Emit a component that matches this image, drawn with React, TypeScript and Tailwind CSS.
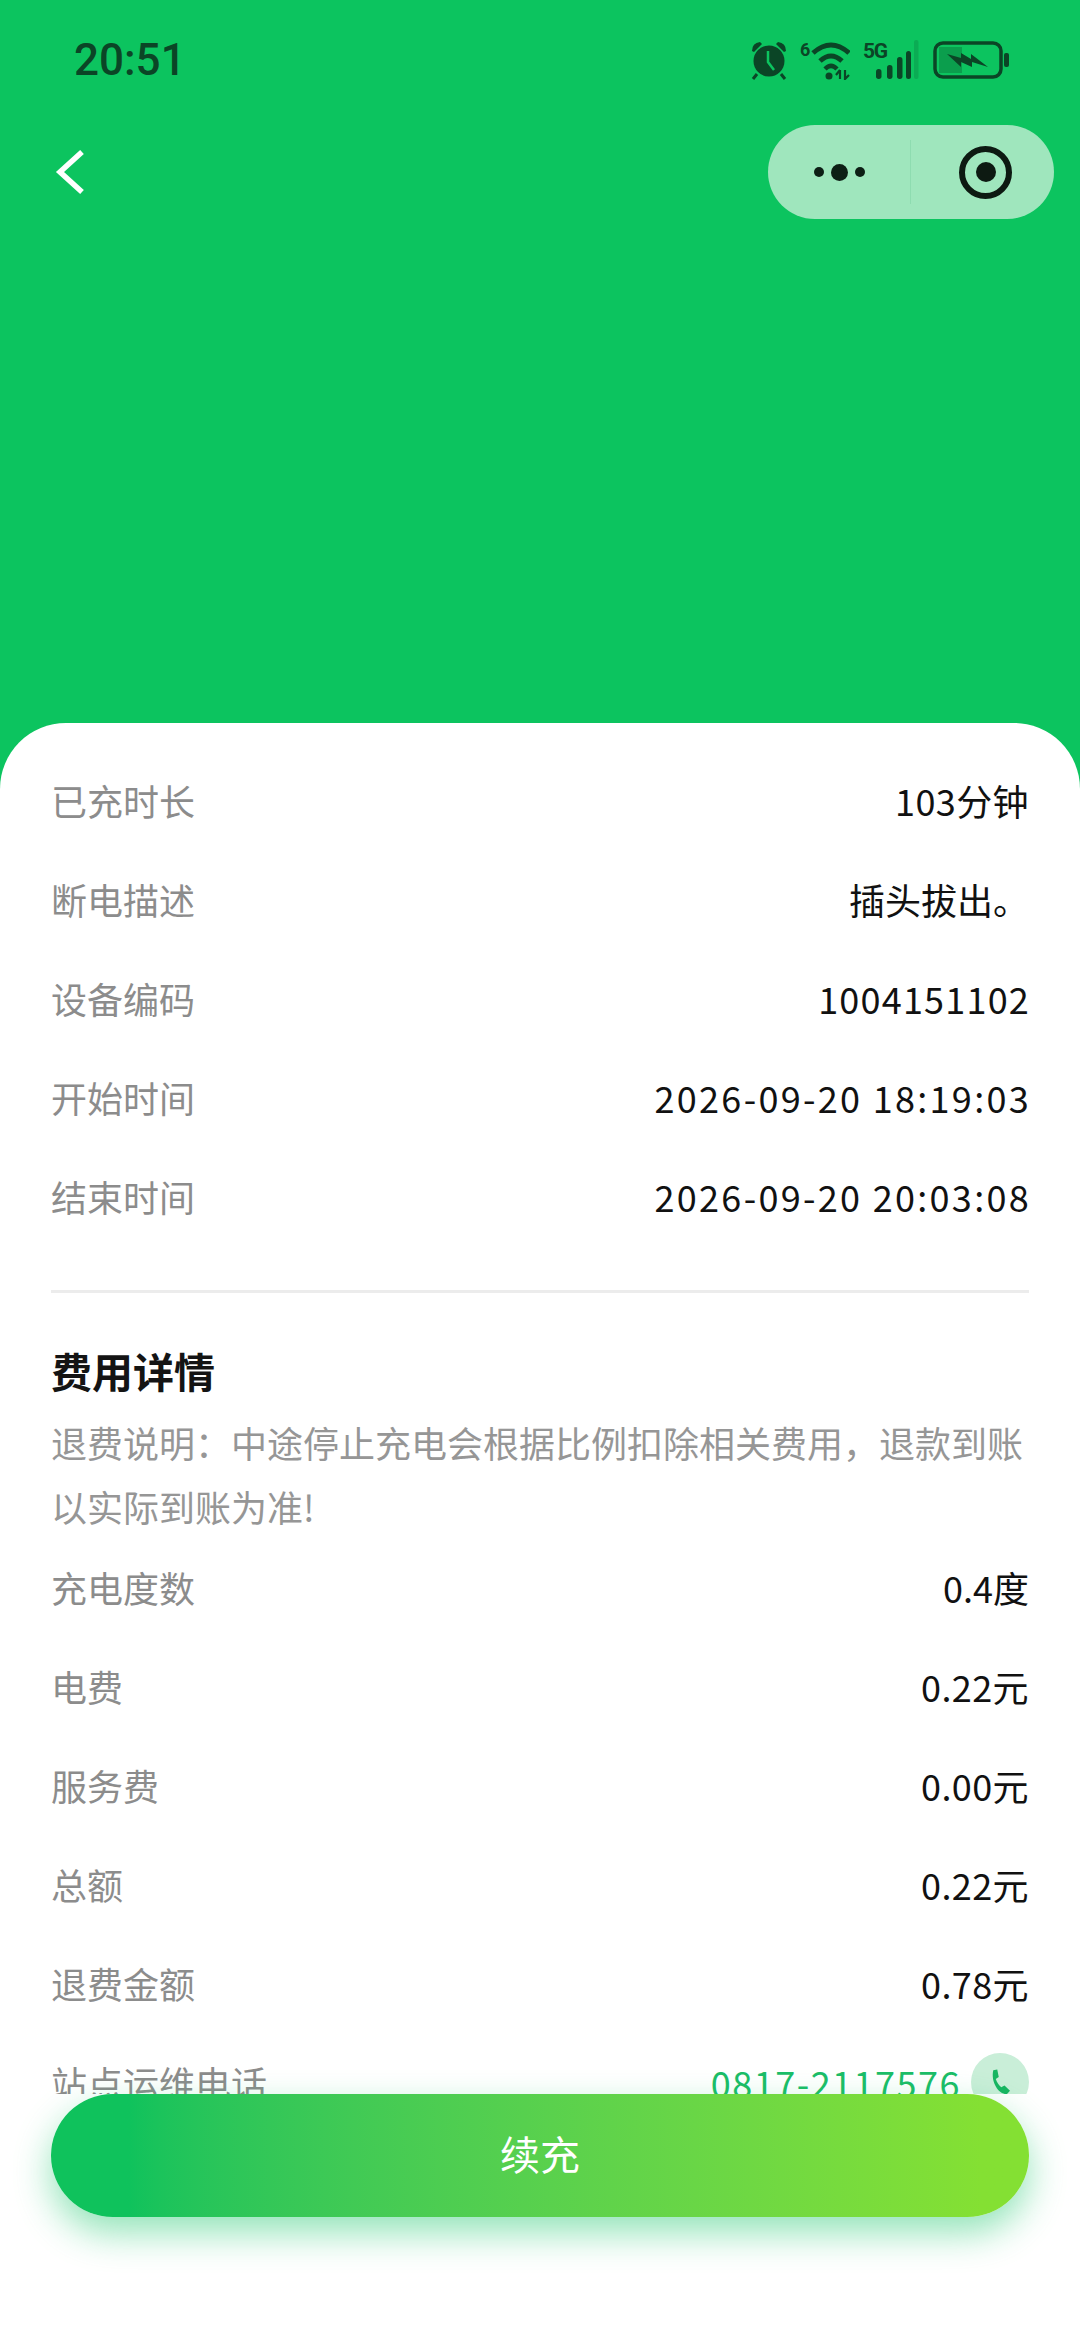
const cjk = { fontFamily: '"Noto Sans CJK SC", "Noto Sans", sans-serif' };

const chargeRows = [
  { label: "已充时长", value: "103分钟", track: "tracking-[0.4px]" },
  { label: "断电描述", value: "插头拔出。", track: "" },
  { label: "设备编码", value: "1004151102", track: "tracking-[1.2px] mr-[-1px]" },
  { label: "开始时间", value: "2026-09-20 18:19:03", track: "tracking-[2.3px] mr-[-2px]" },
  { label: "结束时间", value: "2026-09-20 20:03:08", track: "tracking-[2.3px] mr-[-2px]" },
];

const feeRows = [
  { label: "充电度数", value: "0.4度", track: "" },
  { label: "电费", value: "0.22元", track: "tracking-[0.4px]" },
  { label: "服务费", value: "0.00元", track: "tracking-[0.4px]" },
  { label: "总额", value: "0.22元", track: "tracking-[0.4px]" },
  { label: "退费金额", value: "0.78元", track: "tracking-[0.4px]" },
];

function Row({ label, children }: { label: string; children: React.ReactNode }) {
  return (
    <div className="flex h-[99px] items-center justify-between">
      <span className="text-[36px] leading-none text-[#8c8c8c]">{label}</span>
      {children}
    </div>
  );
}

function StatusIcons() {
  return (
    <div className="flex items-center text-[#0b4526]">
      <svg width="38" height="40" viewBox="0 0 38 40" className="mr-[12px]">
        <circle cx="19" cy="21" r="15.5" fill="currentColor" />
        <path d="M2 11 Q2 3 10 2 L12 4 L4 12Z M36 11 Q36 3 28 2 L26 4 L34 12Z" fill="currentColor" />
        <path d="M7 34 L3 39 M31 34 L35 39" stroke="currentColor" strokeWidth="3" />
        <path d="M18 11 V22 L24 30" fill="none" stroke="#0cc45f" strokeWidth="2.5" />
      </svg>
      <svg width="50" height="40" viewBox="0 0 50 40" className="mr-[13px]">
        <text x="0" y="16" fontSize="18" fontWeight="700" fill="currentColor" fontFamily="Roboto, sans-serif">6</text>
        <path d="M13 13 Q31 -3 49 13" fill="none" stroke="currentColor" strokeWidth="5" />
        <path d="M20 21 Q31 11 42 21" fill="none" stroke="currentColor" strokeWidth="5" />
        <path d="M25 29 Q31 23 37 29" fill="none" stroke="currentColor" strokeWidth="4.5" />
        <circle cx="29" cy="36" r="3.5" fill="currentColor" />
        <path d="M40 30 V39 M36 35 L40 30 M45 30 V39 L49 35" fill="none" stroke="currentColor" strokeWidth="2.2" />
      </svg>
      <svg width="56" height="40" viewBox="0 0 56 40" className="mr-[14px]">
        <text x="0" y="18" fontSize="21" fontWeight="700" fill="currentColor" fontFamily="Roboto, sans-serif" textLength="25">5G</text>
        <rect x="13" y="29" width="5.5" height="10" rx="2.7" fill="currentColor" />
        <rect x="24" y="25" width="5.5" height="14" rx="2.7" fill="currentColor" />
        <rect x="34" y="17" width="5.5" height="22" rx="2.7" fill="currentColor" />
        <rect x="43" y="11" width="5" height="28" rx="2.5" fill="currentColor" />
        <rect x="51" y="0" width="4.5" height="39" rx="2" fill="currentColor" opacity="0.18" />
      </svg>
      <svg width="76" height="38" viewBox="0 0 76 38">
        <rect x="2" y="2" width="66" height="34" rx="8" fill="none" stroke="currentColor" strokeWidth="3.5" />
        <path d="M6 6 H29 V32 H6Z" fill="currentColor" opacity="0.3" />
        <path d="M14 13 L28 17 L28 12 L38 18 L38 13 L55 26 L39 21 L39 26 L28 21 L28 26Z" fill="currentColor" />
        <rect x="71" y="12" width="5" height="14" rx="2" fill="currentColor" />
      </svg>
    </div>
  );
}

export default function App() {
  return (
    <div className="relative flex h-[2340px] w-[1080px] flex-col overflow-hidden bg-[#0cc45f]" style={cjk}>
      <header className="h-[723px] shrink-0 pt-[40px]">
        <div className="flex h-[40px] items-center justify-between pl-[74px] pr-[71px]">
          <span className="text-[44px] font-medium leading-none text-[#0b4526]" style={{ fontFamily: "Roboto, sans-serif" }}>
            20:51
          </span>
          <StatusIcons />
        </div>
        <div className="mt-[45px] flex h-[94px] items-center justify-between pl-[55px] pr-[26px]">
          <svg width="30" height="46" viewBox="0 0 30 46">
            <path d="M27 3 L5 23 L27 43" fill="none" stroke="#fff" strokeWidth="5.5" />
          </svg>
          <div className="flex h-[94px] w-[286px] items-center rounded-[47px] bg-[#9fe6bd]">
            <div className="flex h-[64px] w-[143px] items-center justify-center gap-[7px] border-r border-[#8edcb0]">
              <span className="h-[10px] w-[10px] rounded-full bg-[#0d1f15]" />
              <span className="h-[17px] w-[17px] rounded-full bg-[#0d1f15]" />
              <span className="h-[10px] w-[10px] rounded-full bg-[#0d1f15]" />
            </div>
            <div className="flex flex-1 items-center justify-center pl-[6px]">
              <div className="flex h-[53px] w-[53px] items-center justify-center rounded-full border-[6px] border-[#0d1a12]">
                <span className="h-[20px] w-[20px] rounded-full bg-[#0d1a12]" />
              </div>
            </div>
          </div>
        </div>
      </header>

      <main className="flex-1 rounded-t-[66px] bg-white px-[51px] pt-[27px]">
        {chargeRows.map((row) => (
          <Row key={row.label} label={row.label}>
            <span className={`text-[36px] leading-none text-[#111] ${row.track}`}>{row.value}</span>
          </Row>
        ))}
        <div className="mt-[45px] h-[3px] bg-[#ececec]" />
        <h2 className="mt-[47px] text-[41px] font-bold leading-[60px] text-[#141414]">费用详情</h2>
        <p className="mb-[-1px] mt-[10px] text-[36px] leading-[64px] text-[#969696]">
          退费说明：中途停止充电会根据比例扣除相关费用，退款到账以实际到账为准!
        </p>
        {feeRows.map((row) => (
          <Row key={row.label} label={row.label}>
            <span className={`text-[36px] leading-none text-[#111] ${row.track}`}>{row.value}</span>
          </Row>
        ))}
        <Row label="站点运维电话">
          <div className="flex items-center gap-[10px]">
            <span className="text-[36px] leading-none tracking-[1.5px] text-[#1cbd68]">0817-2117576</span>
            <span className="flex h-[58px] w-[58px] items-center justify-center rounded-full bg-[#c9eed8]">
              <svg width="30" height="30" viewBox="0 0 24 24" fill="#17b561">
                <path d="M6.6 2.5 L9.8 2 L11 8 L8.6 9.6 C9.4 12 11 14.6 13 16.2 L15.6 14.8 L20 19 L17.6 21.6 C11 22 4.5 12 6.6 2.5Z" />
              </svg>
            </span>
          </div>
        </Row>
      </main>

      <footer className="absolute inset-x-0 top-[2094px] bottom-0 bg-white px-[51px]">
        <button className="h-[123px] w-full rounded-[62px] bg-gradient-to-r from-[#0fc25c] from-[8%] to-[#84e033] to-[95%] pb-[5px] text-[40px] leading-none text-white shadow-[0_16px_36px_rgba(16,195,100,0.45)]">
          续充
        </button>
      </footer>
    </div>
  );
}
